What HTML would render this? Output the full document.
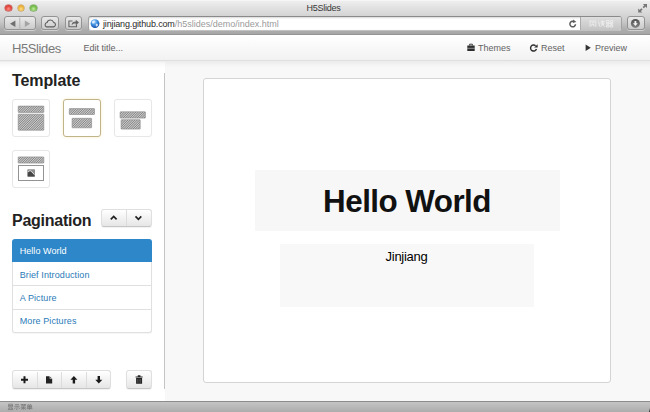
<!DOCTYPE html>
<html><head><meta charset="utf-8">
<style>
*{box-sizing:border-box;margin:0;padding:0}
html,body{width:650px;height:412px;overflow:hidden;background:#fff;font-family:"Liberation Sans",sans-serif;}
body{position:relative}
.abs{position:absolute;white-space:nowrap}
#chrome{left:0;top:0;width:650px;height:35px;background:linear-gradient(#eeeeee 0%,#dcdcdc 30%,#cbcbcb 60%,#adadad 86%,#a6a6a6 100%);border-bottom:1px solid #939393;border-top:1px solid #f6f6f6}
#title{left:-1.5px;top:3.4px;width:650px;text-align:center;font-size:9px;line-height:10px;color:#383838;letter-spacing:-0.25px}
.light{width:6.8px;height:6.8px;border-radius:50%;top:4.7px}
.cbtn{top:16.3px;height:14.2px;border:1px solid #939393;border-radius:3px;background:linear-gradient(#e9e9e9,#cbcbcb);box-shadow:0 1px 0 rgba(255,255,255,.45)}
#url{left:87.5px;top:15.5px;width:534px;height:15px;border:1px solid #a2a2a2;border-top-color:#8a8a8a;border-bottom-color:#c2c2c2;border-radius:3px;background:#fff;box-shadow:inset 0 1px 2px rgba(0,0,0,.16)}
#urltxt{left:103px;top:19px;font-size:9px;line-height:11px;color:#9a9a9a}
#urltxt b{font-weight:normal;color:#2a2a2a;letter-spacing:-0.15px}
#reader{left:579.8px;top:16.5px;width:41.3px;height:13px;background:linear-gradient(#dedede,#c4c4c4);border-left:1px solid #ababab;border-radius:0 2px 2px 0}
#navbar{left:0;top:35px;width:650px;height:26px;background:linear-gradient(#ffffff,#f2f2f2);border-bottom:1px solid #dfdfdf;box-shadow:0 1px 2px rgba(0,0,0,.04)}
#brand{left:12px;top:41px;font-size:13px;line-height:15px;color:#7a7a7a;letter-spacing:-0.4px}
.nav{top:43px;font-size:9px;line-height:10px;color:#636363}
#side{left:0;top:62px;width:165px;height:340px;background:#fff}
#vline{left:164px;top:73px;width:1px;height:316px;background:#c4c4c4}
#main{left:165px;top:62px;width:485px;height:340px;background:#f8f8f8}
#slide{left:203px;top:78px;width:408px;height:305px;background:#fff;border:1px solid #d4d4d4;border-radius:3px}
h2{position:absolute;font-size:16px;line-height:16px;font-weight:bold;color:#222;white-space:nowrap}
.tpl{width:38px;height:38px;border:1px solid #e7e7e7;border-radius:3px;background:#fff;box-shadow:0 0 1px rgba(0,0,0,.04)}
.h{position:absolute;background:repeating-linear-gradient(135deg,#8a8a8a 0 0.7px,#bdbdbd 0.7px 1.4px);outline:0.5px solid #8c8c8c}
.pt{left:19.7px;font-size:9px;line-height:10px;color:#2a7ab8;letter-spacing:0.1px}
.btn{border:1px solid #dfdfdf;border-bottom-color:#c6c6c6;border-radius:3px;background:linear-gradient(#ffffff,#e6e6e6);box-shadow:0 1px 1px rgba(0,0,0,.06)}
.dv{width:1px;background:#dcdcdc}
#status{left:0;top:401.3px;width:650px;height:10.7px;background:linear-gradient(#c4c4c4,#adadad);border-top:1px solid #8c8c8c}
svg{position:absolute;left:0;top:0}
</style></head><body>
<div id="chrome" class="abs"></div>
<div id="title" class="abs">H5Slides</div>
<div class="abs light" style="left:4.8px;background:radial-gradient(circle at 50% 65%,#ff8f86 0%,#e0443c 55%,#c9352e 100%);box-shadow:0 0 0 .5px #b8504a"></div>
<div class="abs light" style="left:17.5px;background:radial-gradient(circle at 50% 65%,#ffe08a 0%,#eab03a 55%,#d79a28 100%);box-shadow:0 0 0 .5px #bd9240"></div>
<div class="abs light" style="left:30.2px;background:radial-gradient(circle at 50% 65%,#c4eea0 0%,#74bb4c 55%,#5aa43a 100%);box-shadow:0 0 0 .5px #699c4e"></div>
<div class="abs cbtn" style="left:4.3px;width:31.5px"></div>
<div class="abs cbtn" style="left:40.5px;width:18.5px"></div>
<div class="abs cbtn" style="left:64.5px;width:17.5px"></div>
<div id="url" class="abs"></div>
<div id="reader" class="abs"></div>
<div id="urltxt" class="abs"><b>jinjiang.github.com</b>/h5slides/demo/index.html</div>
<div class="abs cbtn" style="left:626.5px;width:18px"></div>

<div id="navbar" class="abs"></div>
<div id="brand" class="abs">H5Slides</div>
<div class="abs nav" style="left:83.5px">Edit title...</div>
<div class="abs nav" style="left:478px">Themes</div>
<div class="abs nav" style="left:541px">Reset</div>
<div class="abs nav" style="left:595px">Preview</div>

<div id="side" class="abs"></div>
<div id="main" class="abs"></div>
<div id="vline" class="abs"></div>
<div class="abs" style="left:0;top:61px;width:650px;height:7px;background:linear-gradient(rgba(0,0,0,.055),rgba(0,0,0,.02) 50%,rgba(0,0,0,0))"></div>
<div id="slide" class="abs"></div>

<h2 style="left:12px;top:73.2px;letter-spacing:-0.1px">Template</h2>
<div class="abs tpl" style="left:12px;top:99px"></div>
<div class="abs tpl" style="left:63px;top:99px;border-color:#c2b48a;box-shadow:0 0 3px rgba(240,220,140,.5)"></div>
<div class="abs tpl" style="left:114px;top:99px"></div>
<div class="abs tpl" style="left:12px;top:150px"></div>
<div class="abs" style="left:18px;top:165px;width:26px;height:16.2px;border:1px solid #939393;background:#fff"></div>

<h2 style="left:12px;top:212.8px;letter-spacing:-0.25px">Pagination</h2>
<div class="abs btn" style="left:101.200px;top:208.600px;width:50.900px;height:18.200px"></div>
<div class="abs dv" style="left:126px;top:209.600px;height:16.200px"></div>
<div class="abs" style="left:12px;top:261px;width:140px;height:72px;border:1px solid #e0e0e0;border-top:none;border-radius:0 0 3px 3px;background:#fff;box-shadow:0 1px 1px rgba(0,0,0,.04)"></div>
<div class="abs" style="left:12px;top:239.3px;width:140px;height:22.7px;background:#2d87c9;border-radius:3px 3px 0 0"></div>
<div class="abs" style="left:13px;top:285.3px;width:138px;height:1px;background:#e0e0e0"></div>
<div class="abs" style="left:13px;top:308.8px;width:138px;height:1px;background:#e0e0e0"></div>
<div class="abs pt" style="top:246.2px;color:#fff;letter-spacing:0.05px">Hello World</div>
<div class="abs pt" style="top:269.6px">Brief Introduction</div>
<div class="abs pt" style="top:293px">A Picture</div>
<div class="abs pt" style="top:316.4px">More Pictures</div>

<div class="abs" style="left:254.5px;top:170px;width:305px;height:61px;background:#f7f7f7"></div>
<div class="abs" style="left:254.5px;top:183.7px;width:305px;text-align:center;font-size:31.4px;line-height:36px;font-weight:bold;color:#111;letter-spacing:-0.55px">Hello World</div>
<div class="abs" style="left:280px;top:244px;width:254px;height:62.5px;background:#f8f8f8"></div>
<div class="abs" style="left:279.5px;top:248.8px;width:254px;text-align:center;font-size:13px;line-height:15px;color:#000;letter-spacing:-0.27px">Jinjiang</div>

<div class="abs btn" style="left:12.200px;top:370.200px;width:99.300px;height:18.400px"></div>
<div class="abs dv" style="left:36.600px;top:371.5px;height:16px"></div>
<div class="abs dv" style="left:61.200px;top:371.5px;height:16px"></div>
<div class="abs dv" style="left:86px;top:371.5px;height:16px"></div>
<div class="abs btn" style="left:126.100px;top:370.200px;width:25.600px;height:18.400px"></div>
<div id="status" class="abs"></div>
<div class="abs" style="left:649px;top:408px;width:1px;height:4px;background:linear-gradient(rgba(60,60,60,0),#333)"></div>

<svg width="650" height="412" viewBox="0 0 650 412">
<defs><pattern id="ht" width="1.65" height="1.65" patternUnits="userSpaceOnUse" patternTransform="rotate(-45)"><rect width="1.65" height="1.65" fill="#d2d2d2"/><rect width="1.65" height="0.8" fill="#808080"/></pattern></defs>
 <g fill="url(#ht)" stroke="#868686" stroke-width="0.6">
 <rect x="18.2" y="106.1" width="25.6" height="6.3" rx=".4"/><rect x="18.2" y="114.2" width="25.6" height="16" rx=".4"/>
 <rect x="69.3" y="108.6" width="25.2" height="5.9" rx=".4"/><rect x="72.1" y="118.3" width="19.5" height="9.5" rx=".4"/>
 <rect x="120.1" y="111.8" width="25.3" height="6.3" rx=".4"/><rect x="121.1" y="119.7" width="19.1" height="9.4" rx=".4"/>
 <rect x="18.2" y="156.9" width="25.6" height="6.2" rx=".4"/>
 </g>
 <!-- back / forward -->
 <path d="M15.4 20.6 L10 23.8 L15.4 27z" fill="#6e6e6e"/>
 <path d="M24.8 20.6 L30.2 23.8 L24.8 27z" fill="#a4a4a4"/>
 <path d="M19.8 17.5v12.5" stroke="#a9a9a9" stroke-width="0.8"/>
 <!-- cloud -->
 <path d="M46.5 26.9 A2.3 2.3 0 0 1 47.1 22.5 A3.4 3.4 0 0 1 53.6 22.4 A2.3 2.3 0 0 1 53.7 26.9 Z" fill="none" stroke="#5e5e5e" stroke-width="1.1" stroke-linejoin="round"/>
 <!-- share -->
 <path d="M72.5 21h-3.6v5.8h7.6v-2.2" fill="none" stroke="#666" stroke-width="1.1"/>
 <path d="M71.6 25.2c0.2-2.6 1.8-3.6 4.2-3.6v-1.9l3.2 2.8-3.2 2.8v-1.9c-1.9 0-3.1 0.3-4.2 1.8z" fill="#666"/>
 <!-- globe -->
 <defs><radialGradient id="gl" cx="40%" cy="30%" r="70%"><stop offset="0" stop-color="#bfe0ff"/><stop offset="0.5" stop-color="#3f8fe0"/><stop offset="1" stop-color="#1450a8"/></radialGradient></defs>
 <circle cx="95" cy="23.6" r="4.4" fill="url(#gl)"/>
 <path d="M92.3 21.2c1-.9 2.2-.8 2.6 0 .3.9-.8 1.400-1.400 2.200-.4.600-1.400-.2-1.600-1.100z M96 24c.9-.5 2.200.1 1.900 1.300-.3 1.100-1.500 1.800-1.900.9-.3-.7-.5-1.700 0-2.200z" fill="#e8f4ff" opacity=".85"/>
 <!-- reload -->
 <path d="M575.500 24.200a2.800 2.800 0 1 1-1.200-2.500" fill="none" stroke="#5c5c5c" stroke-width="1.500"/>
 <path d="M573.300 19.400l3 2.600-3.600.900z" fill="#5c5c5c"/>
 <!-- reader text fake -->
 <g fill="none" stroke="#efefef" stroke-width="0.9" opacity=".95">
  <path d="M590 20.600v6.200M590 21h5.800v5.800M591.600 22.600h2.800M591.600 24.200h2.800M592.200 24.200l-.8 2M593.600 24.200v1.800h1"/>
  <path d="M598.200 20.800l.8.800M597.800 22.800h1.400v3.400l1-.8M600.600 21.400h4M602.600 20.400v2.600M600.400 23h4.400M601 24.200h3.400M602.800 23v1.600l-2.200 2.200M602.800 25l1.800 1.800"/>
  <path d="M606.400 20.600h2.600v2h-2.600zM610.200 20.600h2.600v2h-2.600zM606 23.600h7.200M609.600 23.600l-3.400 1.800M609.600 23.600l3.400 1.800M606.400 25.200h2.600v1.800h-2.600zM610.200 25.200h2.600v1.800h-2.600z"/>
 </g>
 <!-- download -->
 <defs><linearGradient id="dl" x1="0" y1="0" x2="0" y2="1"><stop offset="0" stop-color="#4e4e4e"/><stop offset="1" stop-color="#838383"/></linearGradient></defs><circle cx="635.400" cy="23.400" r="4.500" fill="url(#dl)"/>
 <path d="M634.500 20.900h1.800v2.300h1.500l-2.400 2.700-2.400-2.700h1.500z" fill="#f2f2f2"/>
 <!-- fullscreen -->
 <path d="M642.900 3.900h4.100v4.100z M638.200 12.600h4.100l-4.100-4.100z" fill="#767676"/>
 <path d="M645.300 5.600l-2.100 2.100 M639.900 10.900l2.100-2.100" stroke="#767676" stroke-width="1.700"/>
 <!-- briefcase -->
 <path d="M467.300 45.500h7.400v5.500h-7.400z" fill="#2e2e2e"/>
 <path d="M469.600 45.500v-1.300h2.800v1.300" fill="none" stroke="#2e2e2e" stroke-width=".9"/>
 <path d="M467.300 48.300h7.400" stroke="#e8e8e8" stroke-width=".55"/>
 <!-- reset -->
 <path d="M536.500 49a3.050 3.050 0 1 1-.9-3.300" fill="none" stroke="#2e2e2e" stroke-width="1.400"/>
 <path d="M537.600 44.200v3.400h-3.400z" fill="#2e2e2e"/>
 <!-- play -->
 <path d="M585.600 44.400l5.200 3.300-5.200 3.300z" fill="#333"/>
 <!-- picture icon -->
 <rect x="27.300" y="169.300" width="7.700" height="7.500" rx=".7" fill="#8e8e8e"/>
 <path d="M27.800 172.200c1.400-1.600 2.600-1.900 3.600-.8s1.600 2.400 3.200 3.300v1.700h-6.800z" fill="#454545"/>
 <path d="M27.900 172.200c1.400-1.600 2.600-1.900 3.600-.8s1.600 2.400 3.100 3.300" fill="none" stroke="#f4f4f4" stroke-width=".9"/>
 <!-- chevrons -->
 <path d="M110.800 219.400l2.900-2.900 2.900 2.900" fill="none" stroke="#222" stroke-width="1.700"/>
 <path d="M135.500 216.400l2.900 2.900 2.900-2.900" fill="none" stroke="#222" stroke-width="1.700"/>
 <!-- plus -->
 <path d="M21 379.700h7M24.500 376.200v7" stroke="#1a1a1a" stroke-width="2"/>
 <!-- file -->
 <path d="M46 376.200h3.600l2.600 2.600v4.700h-6.200z" fill="#222"/>
 <path d="M49.900 376v2.600h2.600" fill="none" stroke="#f4f4f4" stroke-width=".6"/>
 <!-- up arrow -->
 <path d="M73.900 375.900l3.500 3.800h-2.300v3.900h-2.400v-3.900h-2.300z" fill="#1a1a1a"/>
 <!-- down arrow -->
 <path d="M98.800 383.600l3.500-3.800h-2.300v-3.900h-2.400v3.900h-2.300z" fill="#1a1a1a"/>
 <!-- trash -->
 <path d="M135.600 376.600h7v1h-7z M137.800 375.300h2.600v1.300h-2.600z M136.100 378.100h6v5.600h-6z" fill="#222"/>
 <path d="M137.600 379v3.800M139.100 379v3.800M140.600 379v3.800" stroke="#888" stroke-width=".4"/>
 <!-- status text fake -->
 <g fill="none" stroke="#7a7a7a" stroke-width="0.75">
  <path d="M8.600 404.200h4v2.600h-4zM8.600 405.500h4M9.800 407.200v2.200M11.400 407.200v2.200M8.400 407.800l.5 1.200M12.800 407.800l-.5 1.200M7.800 409.600h5.600"/>
  <path d="M15 404.600h4M14.200 406.200h5.600M17 406.200v3.400l-.8-.2M15.400 407.400l-1 1.600M18.600 407.400l1 1.600"/>
  <path d="M20.600 404.600h5.600M22.200 404v1.400M24.600 404v1.400M21 406l4.800-.4M21.800 406.400l.4.800M23.400 406.200l.2.800M25 406.200l-.4.800M20.600 407.800h5.600M23.400 407v2.800M23.400 407.800l-2.600 1.800M23.400 407.800l2.600 1.800"/>
  <path d="M27.800 404l.8.800M31 404l-.8.800M27.600 405.200h4v2.600h-4zM27.600 406.500h4M29.600 405.200v4.600M26.800 408.600h5.600"/>
 </g>
</svg>
</body></html>
